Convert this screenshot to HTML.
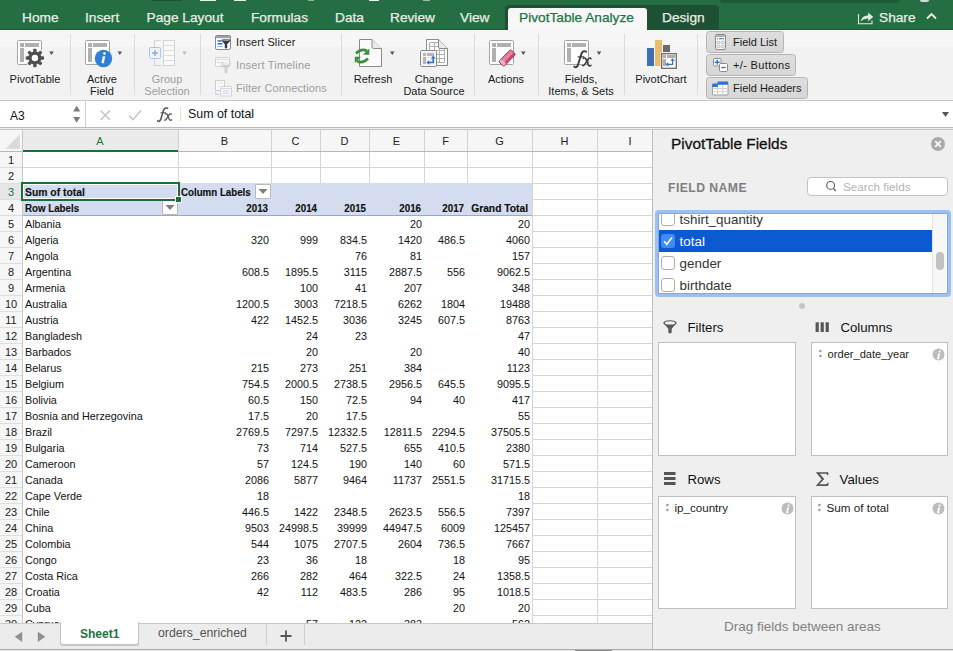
<!DOCTYPE html>
<html><head><meta charset="utf-8">
<style>
*{box-sizing:border-box;margin:0;padding:0}
html,body{width:953px;height:651px;overflow:hidden;background:#fff}
body{position:relative;font-family:"Liberation Sans",sans-serif;color:#000}
.a{position:absolute}
.t{position:absolute;white-space:nowrap;line-height:1}
.tab{position:absolute;top:11.1px;font-size:13.7px;color:#e9efe6;white-space:nowrap;line-height:14px;-webkit-text-stroke:0.25px #e9efe6}
.lbl{position:absolute;font-size:11px;color:#1a1a1a;white-space:nowrap;line-height:12px;text-align:center}
.dis{color:#9d9d9d}
.sep{position:absolute;top:34px;width:1px;height:61px;background:#dcdcdc}
.dd{position:absolute;width:0;height:0;border-left:2.5px solid transparent;border-right:2.5px solid transparent;border-top:4px solid #555}
.c{position:absolute;font-size:10.8px;line-height:16px;height:16px;white-space:nowrap;color:#111}
.n{text-align:right}
.b{font-weight:bold;font-size:10.7px;-webkit-text-stroke:0.15px #000;transform:scaleX(0.91);transform-origin:0 50%}
.b.n{transform-origin:100% 50%}
.rh{position:absolute;left:0;width:22px;text-align:center;font-size:11px;line-height:16px;color:#222}
.gl{position:absolute;background:#d5d5d5}
.ch{position:absolute;top:130px;height:21px;line-height:21px;text-align:center;font-size:11px;color:#222}
</style></head><body>
<!-- TAB BAR -->
<div class="a" style="left:0;top:0;width:953px;height:30px;background:#256e44"></div>
<div class="a" style="left:0;top:29px;width:953px;height:1px;background:#1b5833"></div>
<div class="a" style="left:720px;top:0;width:180px;height:3px;background:#1f5a37;border-radius:0 0 4px 4px"></div>
<div class="a" style="left:920px;top:0;width:9px;height:2px;background:#cfdcd3;border-radius:0 0 4px 4px"></div>
<div class="a" style="left:151px;top:0;width:31px;height:1px;background:#1d5034;border-radius:0 0 3px 3px"></div>
<div class="a" style="left:200px;top:0;width:16px;height:1px;background:#e8efe9"></div>
<div class="a" style="left:234px;top:0;width:12px;height:1px;background:#e8efe9"></div>
<div class="a" style="left:308px;top:0;width:6px;height:1px;background:#8fb39c"></div>
<div class="a" style="left:369px;top:0;width:10px;height:1px;background:#f2f6f3"></div>
<div class="a" style="left:423px;top:0;width:7px;height:1px;background:#9dbba8"></div>
<!-- contextual group -->
<div class="a" style="left:505px;top:5px;width:214px;height:25px;background:#1e5033;border-radius:4px 4px 0 0"></div>
<div class="a" style="left:508px;top:8px;width:139px;height:22px;background:#f7f7f7;border-radius:3px 3px 0 0"></div>
<div class="tab" style="left:22px">Home</div>
<div class="tab" style="left:85px">Insert</div>
<div class="tab" style="left:146.6px">Page Layout</div>
<div class="tab" style="left:251px">Formulas</div>
<div class="tab" style="left:335px">Data</div>
<div class="tab" style="left:390px">Review</div>
<div class="tab" style="left:460px">View</div>
<div class="tab" style="left:519px;color:#217346;-webkit-text-stroke:0.25px #217346">PivotTable Analyze</div>
<div class="tab" style="left:662px">Design</div>
<!-- share -->
<svg class="a" style="left:857px;top:10px" width="17" height="15" viewBox="0 0 17 15">
<path d="M1.5 4 V13.8 H15 V10.5" fill="none" stroke="#e3ebe3" stroke-width="1.1"/>
<path d="M3.8 11.8 C4.2 7.6 7.2 5.6 11.2 5.6 V2.4 L16.2 6.9 L11.2 11.2 V8.4 C8 8.4 5.6 9.4 3.8 11.8 Z" fill="#e3ebe3"/>
</svg>
<div class="tab" style="left:879px">Share</div>
<svg class="a" style="left:926px;top:12px" width="11" height="8" viewBox="0 0 11 8">
<path d="M1 6.5 L5.5 2 L10 6.5" fill="none" stroke="#e9efe6" stroke-width="1.8"/>
</svg>
<!-- RIBBON -->
<div class="a" style="left:0;top:30px;width:953px;height:70px;background:linear-gradient(#f6f6f6 0,#f6f6f6 17px,#f2f2f2 17px)"></div>
<div class="a" style="left:0;top:100px;width:953px;height:1px;background:#c9c9c9"></div>
<div class="sep" style="left:70px"></div>
<div class="sep" style="left:134px"></div>
<div class="sep" style="left:200px"></div>
<div class="sep" style="left:341px"></div>
<div class="sep" style="left:474px"></div>
<div class="sep" style="left:538px"></div>
<div class="sep" style="left:624px"></div>
<div class="sep" style="left:697px"></div>
<!-- PivotTable -->
<svg class="a" style="left:0;top:30px" width="70" height="70" viewBox="0 30 70 70">
<rect x="17.5" y="40.5" width="24" height="24" rx="1" fill="#fff" stroke="#a3a3a3"/>
<rect x="20" y="43" width="4" height="4" fill="#b0b0b0"/>
<rect x="25" y="43" width="14" height="4" fill="#b0b0b0"/>
<rect x="20" y="48" width="4" height="14" fill="#b0b0b0"/>
<g transform="translate(34.9 58)"><g fill="#f5f5f5" stroke="#f5f5f5" stroke-width="1.6"><circle r="6.5"/><rect x="-1.7" y="-9.2" width="3.4" height="5.5" rx="1.2" transform="rotate(0)"/><rect x="-1.7" y="-9.2" width="3.4" height="5.5" rx="1.2" transform="rotate(45)"/><rect x="-1.7" y="-9.2" width="3.4" height="5.5" rx="1.2" transform="rotate(90)"/><rect x="-1.7" y="-9.2" width="3.4" height="5.5" rx="1.2" transform="rotate(135)"/><rect x="-1.7" y="-9.2" width="3.4" height="5.5" rx="1.2" transform="rotate(180)"/><rect x="-1.7" y="-9.2" width="3.4" height="5.5" rx="1.2" transform="rotate(225)"/><rect x="-1.7" y="-9.2" width="3.4" height="5.5" rx="1.2" transform="rotate(270)"/><rect x="-1.7" y="-9.2" width="3.4" height="5.5" rx="1.2" transform="rotate(315)"/></g><g fill="#4f4f53"><circle r="6.5"/><rect x="-1.7" y="-9.2" width="3.4" height="5.5" rx="1.2" transform="rotate(0)"/><rect x="-1.7" y="-9.2" width="3.4" height="5.5" rx="1.2" transform="rotate(45)"/><rect x="-1.7" y="-9.2" width="3.4" height="5.5" rx="1.2" transform="rotate(90)"/><rect x="-1.7" y="-9.2" width="3.4" height="5.5" rx="1.2" transform="rotate(135)"/><rect x="-1.7" y="-9.2" width="3.4" height="5.5" rx="1.2" transform="rotate(180)"/><rect x="-1.7" y="-9.2" width="3.4" height="5.5" rx="1.2" transform="rotate(225)"/><rect x="-1.7" y="-9.2" width="3.4" height="5.5" rx="1.2" transform="rotate(270)"/><rect x="-1.7" y="-9.2" width="3.4" height="5.5" rx="1.2" transform="rotate(315)"/></g><circle r="3.2" fill="#fff"/></g>
<path d="M49.2 51.5 L53.8 51.5 L51.5 55 Z" fill="#555"/>
</svg>
<div class="lbl" style="left:5px;width:60px;top:72.7px">PivotTable</div>
<!-- Active Field -->
<svg class="a" style="left:70px;top:30px" width="64" height="70" viewBox="70 30 64 70">
<rect x="85.5" y="40.5" width="24" height="24" rx="1" fill="#fff" stroke="#a3a3a3"/>
<rect x="88" y="43" width="4" height="4" fill="#b0b0b0"/>
<rect x="93" y="43" width="14" height="4" fill="#b0b0b0"/>
<rect x="88" y="48" width="4" height="14" fill="#b0b0b0"/>
<circle cx="103.5" cy="58.5" r="8.7" fill="#2f7ed8"/>
<circle cx="104.4" cy="53.6" r="1.3" fill="#fff"/>
<path d="M103.2 56.3 L105.4 56.3 L103.9 62 Q103.8 62.6 104.6 62.3 L104.4 63 Q102.9 63.5 101.6 63 Q101.3 62.6 101.5 62 L102.7 57.2 L102 57.2 Z" fill="#fff"/>
<path d="M117.5 51.5 L122.1 51.5 L119.8 55 Z" fill="#555"/>
</svg>
<div class="lbl" style="left:72px;width:60px;top:72.7px">Active<br>Field</div>
<!-- Group Selection -->
<svg class="a" style="left:134px;top:30px" width="66" height="70" viewBox="134 30 66 70">
<path d="M161 40.5 H154.5 V65.5 H161" fill="none" stroke="#d3d3d3"/>
<rect x="163.5" y="40.5" width="11" height="25" fill="#fafafa" stroke="#d3d3d3"/>
<path d="M163.5 45.5 H174.5 M163.5 50.5 H174.5 M163.5 55.5 H174.5 M163.5 60.5 H174.5" stroke="#dedede"/>
<rect x="149.5" y="47.5" width="11" height="11" rx="1" fill="#eef3fa" stroke="#a9c4e6"/>
<path d="M155 50 V56 M152 53 H158" stroke="#8fb0dd" stroke-width="1.6"/>
<path d="M182.2 51.5 L186.8 51.5 L184.5 55 Z" fill="#bdbdbd"/>
</svg>
<div class="lbl dis" style="left:137px;width:60px;top:72.7px">Group<br>Selection</div>
<!-- Slicer group -->
<svg class="a" style="left:210px;top:30px" width="26" height="70" viewBox="210 30 26 70">
<rect x="215.5" y="35.5" width="15" height="14" rx="1.5" fill="#fff" stroke="#8a8a8a"/>
<rect x="216" y="36" width="14" height="2.2" fill="#a0a0a0"/>
<path d="M217.5 41 H221.5 M217.5 43.8 H222.5" stroke="#2f6fc4" stroke-width="1.5"/>
<path d="M217.5 46.4 H222.5" stroke="#8fb3e3" stroke-width="1.1"/>
<path d="M221.3 40.3 Q221.3 39.2 226 39.2 Q230.7 39.2 230.7 40.3 L227.2 44.3 V48 Q226 48.8 224.8 48 V44.3 Z" fill="#3b3b3b"/>
<ellipse cx="226" cy="40.3" rx="3.6" ry="0.8" fill="#9a9a9a"/>
<!-- timeline disabled -->
<rect x="215.5" y="57.5" width="14" height="9" rx="1" fill="#fafafa" stroke="#d0d0d0"/>
<path d="M216 59.5 H229" stroke="#dcdcdc"/>
<path d="M217.5 62.5 H219 M220.5 62.5 H221.5 M223 62.5 H224" stroke="#a9c2e6" stroke-width="1"/>
<path d="M220.5 64 Q220.5 62.8 226 62.8 Q231.5 62.8 231.5 64 L227.4 68.4 V72.8 Q226 73.6 224.6 72.8 V68.4 Z" fill="#cfcfcf"/>
<ellipse cx="226" cy="64" rx="4.3" ry="0.9" fill="#eeeeee"/>
<!-- filter connections disabled -->
<rect x="215.5" y="80.5" width="9" height="10" fill="#fafafa" stroke="#d0d0d0"/>
<path d="M217.5 83 H218.5 M219.5 83 H222.5 M217.5 85 H218.5 M217.5 87 H218.5" stroke="#d6d6d6"/>
<rect x="220.5" y="86.5" width="11" height="9.5" rx="1" fill="#fafafa" stroke="#d0d0d0"/>
<path d="M221 88.5 H231" stroke="#dadada"/>
<path d="M222.5 91 H229.5 M222.5 93.3 H229.5" stroke="#c0d3ee" stroke-width="1"/>
<path d="M215.8 91.5 V94.3 H219" fill="none" stroke="#b5cbea"/>
</svg>
<div class="t" style="left:236px;top:37.3px;font-size:11px;color:#1a1a1a;letter-spacing:0.12px">Insert Slicer</div>
<div class="t dis" style="left:236px;top:60.1px;font-size:11px;letter-spacing:0.2px">Insert Timeline</div>
<div class="t dis" style="left:236px;top:82.8px;font-size:11px;letter-spacing:0.13px">Filter Connections</div>
<!-- Refresh -->
<svg class="a" style="left:342px;top:30px" width="132" height="70" viewBox="342 30 132 70">
<path d="M359.5 39.5 H372 L381.5 49 V66.5 H359.5 Z" fill="#fbfbfb" stroke="#8a8a8a"/>
<path d="M372 39.5 V47 Q372 48.5 373.5 48.5 H381.5" fill="#ebebeb" stroke="#8a8a8a"/>
<g stroke="#f3f3f3" stroke-width="1.6" fill="none" opacity="0.9"><path d="M356 53.5 Q361 48 367 51"/><path d="M368 58.5 Q363 64 357 60.5"/></g>
<path d="M356 53.5 Q361.5 47.8 367 51" fill="none" stroke="#3e8d3c" stroke-width="2.7"/>
<path d="M369.3 48.6 L369.3 54.8 L363.1 54.8 Z" fill="#3e8d3c"/>
<path d="M368 58.5 Q362.5 64.2 357 61" fill="none" stroke="#3e8d3c" stroke-width="2.7"/>
<path d="M354.8 56.8 L354.8 63 L361 56.8 Z" fill="#3e8d3c"/>
<path d="M390 51.5 L394.6 51.5 L392.3 55 Z" fill="#555"/>
<!-- Change data source -->
<path d="M426.5 39.5 H438.5 L447.5 48.5 V65.5 H426.5 Z" fill="#fff" stroke="#8a8a8a"/>
<path d="M429.5 42.5 H438.5 M429.5 42.5 V62.5 H444.5 V48.5 M429.5 46.5 H438.5 M429.5 50.5 H444.5 M429.5 54.5 H444.5 M429.5 58.5 H444.5 M434.5 42.5 V62.5 M439.5 48.5 V62.5" fill="none" stroke="#b0b0b0"/>
<path d="M438.5 39.5 V47 Q438.5 48.5 440 48.5 H447.5" fill="#ebebeb" stroke="#8a8a8a"/>
<rect x="420.5" y="50.5" width="16" height="16" rx="1" fill="#f3f3f3" stroke="#8a8a8a"/>
<rect x="423" y="53" width="3" height="3" fill="#b5b5b5"/>
<rect x="427" y="53" width="7" height="3" fill="#b5b5b5"/>
<rect x="423" y="57" width="3" height="7" fill="#b5b5b5"/>
<path d="M428.5 62.5 H433.2 V58" fill="none" stroke="#2f74c8" stroke-width="1.6"/>
<path d="M426.3 62.5 L429.3 60.2 L429.3 64.8 Z M433.2 55.6 L430.9 58.6 L435.5 58.6 Z" fill="#2f74c8"/>
</svg>
<div class="lbl" style="left:343px;width:60px;top:72.7px">Refresh</div>
<div class="lbl" style="left:399px;width:70px;top:72.7px">Change<br>Data Source</div>
<!-- Actions -->
<svg class="a" style="left:475px;top:30px" width="222" height="70" viewBox="475 30 222 70">
<rect x="489.5" y="40.5" width="24" height="24" rx="1" fill="#fff" stroke="#a3a3a3"/>
<rect x="492" y="43" width="4" height="4" fill="#b0b0b0"/>
<rect x="497" y="43" width="14" height="4" fill="#b0b0b0"/>
<rect x="492" y="48" width="4" height="14" fill="#b0b0b0"/>
<g transform="translate(507.2 58) rotate(-46)"><rect x="-8.6" y="-3.6" width="17.2" height="7.2" rx="1.8" fill="#c94f72" stroke="#a23155" stroke-width="0.9"/><rect x="-8" y="-3.1" width="16.2" height="3.9" rx="1.2" fill="#e3859e"/><rect x="-8.1" y="-3.1" width="3.4" height="6.2" rx="1" fill="#f0b3c3"/></g>
<path d="M521 51.5 L525.6 51.5 L523.3 55 Z" fill="#555"/>
<!-- Fields -->
<rect x="564.5" y="40.5" width="24" height="24" rx="1" fill="#fff" stroke="#a3a3a3"/>
<rect x="567" y="43" width="4" height="4" fill="#b0b0b0"/>
<rect x="572" y="43" width="14" height="4" fill="#b0b0b0"/>
<rect x="567" y="48" width="4" height="14" fill="#b0b0b0"/>
<g fill="none" stroke="#3a3a3a" stroke-linecap="round"><path d="M574.3 66.6 Q576.3 68.3 577.9 65.2 L581.4 53.8 Q582.9 50.2 586.2 51.6" stroke-width="1.9"/><path d="M578.3 56.9 H583.8" stroke-width="1.3"/><path d="M583.2 58.4 Q585.2 57.2 586.2 59.6 L588 64.4 Q589 66.6 591 65.4" stroke-width="1.6"/><path d="M591 58.6 Q589.6 57.4 588.1 59.2 L584.7 64.4 Q583.7 66 582.6 65.6" stroke-width="1.5"/></g>
<path d="M596.7 51.5 L601.3 51.5 L599 55 Z" fill="#555"/>
<!-- PivotChart -->
<rect x="647" y="48" width="7" height="18" fill="#3d70b0"/>
<rect x="655" y="40" width="7" height="26" fill="#e8bb6d"/>
<rect x="663" y="45" width="7" height="7" fill="#6b6b6b"/>
<rect x="660.5" y="52.5" width="17" height="17" fill="#f4f4f4"/>
<rect x="661.7" y="53.7" width="14.6" height="14.6" fill="#fff" stroke="#6b6b6b" stroke-width="1.3"/>
<rect x="663" y="55" width="3" height="3" fill="#adadad"/>
<rect x="667" y="55" width="8" height="3" fill="#adadad"/>
<rect x="663" y="59" width="3" height="7" fill="#adadad"/>
<path d="M667 64.3 H672.6 V59.6" fill="none" stroke="#3a70b5" stroke-width="1.2"/>
<path d="M668.3 62.6 L666.4 64.3 L668.3 66 M670.9 60.9 L672.6 59 L674.3 60.9" fill="none" stroke="#3a70b5" stroke-width="1.1"/>
</svg>
<div class="lbl" style="left:476px;width:60px;top:72.7px">Actions</div>
<div class="lbl" style="left:541px;width:80px;top:72.7px">Fields,<br>Items, &amp; Sets</div>
<div class="lbl" style="left:631px;width:60px;top:72.7px">PivotChart</div>
<!-- toggle buttons -->
<div class="a" style="left:706px;top:31px;width:78px;height:22px;border:1px solid #b5b5b5;border-radius:3.5px;background:linear-gradient(#dedede,#d6d6d6)"></div>
<div class="a" style="left:706px;top:54px;width:90px;height:22px;border:1px solid #b5b5b5;border-radius:3.5px;background:linear-gradient(#dedede,#d6d6d6)"></div>
<div class="a" style="left:706px;top:77px;width:102px;height:22px;border:1px solid #b5b5b5;border-radius:3.5px;background:linear-gradient(#dedede,#d6d6d6)"></div>
<svg class="a" style="left:706px;top:30px" width="30" height="70" viewBox="706 30 30 70">
<rect x="715.5" y="34.5" width="10" height="15" rx="1.5" fill="#fff" stroke="#8a8a8a"/>
<rect x="716" y="35" width="9" height="2" fill="#b0b0b0"/>
<path d="M717 38.8 H718 M719 38.8 H724" stroke="#2f72c6" stroke-width="1.1"/>
<rect x="716.8" y="41.3" width="3" height="2.4" rx="0.5" fill="none" stroke="#a8a8a8" stroke-width="0.8"/>
<rect x="721.2" y="41.3" width="3" height="2.4" rx="0.5" fill="none" stroke="#a8a8a8" stroke-width="0.8"/>
<rect x="716.8" y="45.3" width="3" height="2.4" rx="0.5" fill="none" stroke="#a8a8a8" stroke-width="0.8"/>
<rect x="721.2" y="45.3" width="3" height="2.4" rx="0.5" fill="none" stroke="#a8a8a8" stroke-width="0.8"/>
<rect x="713.5" y="58.5" width="7.5" height="7.5" rx="1.2" fill="#fff" stroke="#8a8a8a"/>
<path d="M717.25 59.8 V64.7 M714.8 62.25 H719.7" stroke="#2f72c6" stroke-width="1.3"/>
<rect x="719.5" y="63.5" width="8" height="8" rx="1.2" fill="#fff" stroke="#8a8a8a"/>
<path d="M721.3 67.5 H725.7" stroke="#2f72c6" stroke-width="1.3"/>
<rect x="712.5" y="83.5" width="15.5" height="11.5" rx="1" fill="#fff" stroke="#9a9a9a"/>
<path d="M712.5 88.5 H728 M712.5 91.7 H728 M717.5 84 V95 M722.7 84 V95" stroke="#d0d0d0"/>
<rect x="712.3" y="84" width="5.6" height="3" fill="#2f72c6"/>
<rect x="717.5" y="81.6" width="10.7" height="3.2" rx="0.8" fill="#2f72c6"/>
</svg>
<div class="t" style="left:733px;top:37.2px;font-size:11px;color:#1a1a1a">Field List</div>
<div class="t" style="left:733px;top:60.1px;font-size:11px;color:#1a1a1a;letter-spacing:0.35px">+/- Buttons</div>
<div class="t" style="left:733px;top:83.3px;font-size:11px;color:#1a1a1a">Field Headers</div>
<!-- FORMULA BAR -->
<div class="a" style="left:0;top:101px;width:953px;height:26px;background:#fff"></div>
<div class="a" style="left:85px;top:101px;width:1px;height:26px;background:#cfcfcf"></div>
<div class="t" style="left:10px;top:109.5px;font-size:12px;color:#111">A3</div>
<svg class="a" style="left:72px;top:104px" width="10" height="21"><path d="M1.2 7.5 L4.7 1.8 L8.2 7.5 Z M1.2 13 L8.2 13 L4.7 18.8 Z" fill="#7a7a7a"/></svg>
<svg class="a" style="left:98px;top:108px" width="46" height="14"><path d="M2.5 2.5 L12 12 M12 2.5 L2.5 12" stroke="#c6c6c6" stroke-width="1.6"/><path d="M31 7.5 L35 11.5 L43 2.5" fill="none" stroke="#c6c6c6" stroke-width="1.6"/></svg>
<svg class="a" style="left:0;top:0" width="200" height="130"><g transform="translate(157.6 121.9) scale(0.84) translate(-574.3 -67.8)" fill="none" stroke="#555" stroke-linecap="round"><path d="M574.3 66.6 Q576.3 68.3 577.9 65.2 L581.4 53.8 Q582.9 50.2 586.2 51.6" stroke-width="1.9"/><path d="M578.3 56.9 H583.8" stroke-width="1.3"/><path d="M583.2 58.4 Q585.2 57.2 586.2 59.6 L588 64.4 Q589 66.6 591 65.4" stroke-width="1.6"/><path d="M591 58.6 Q589.6 57.4 588.1 59.2 L584.7 64.4 Q583.7 66 582.6 65.6" stroke-width="1.5"/></g></svg>
<div class="a" style="left:180px;top:107px;width:1px;height:14px;background:#dedede"></div>
<div class="t" style="left:188px;top:108.3px;font-size:12.4px;color:#111">Sum of total</div>
<svg class="a" style="left:941px;top:111px" width="9" height="7"><path d="M1 1 L8 1 L4.5 6 Z" fill="#555"/></svg>
<div class="a" style="left:0;top:127px;width:953px;height:1px;background:#b9b9b9"></div>
<div class="a" style="left:0;top:128px;width:953px;height:1px;background:#ececec"></div>
<div class="a" style="left:0;top:129px;width:953px;height:1px;background:#c6c6c6"></div>
<!-- GRID -->
<div class="a" style="left:0;top:130px;width:652px;height:21px;background:#f6f6f6"></div>
<div class="a" style="left:0;top:151px;width:22px;height:472px;background:#f6f6f6"></div>
<div class="a" style="left:23px;top:130px;width:155px;height:21px;background:#eaeaea"></div>
<div class="a" style="left:0;top:184px;width:22px;height:15px;background:#e6e6e6"></div>
<svg class="a" style="left:0;top:130px" width="22" height="21"><path d="M5.5 18.8 L19.8 4.3 L19.8 18.8 Z" fill="#d9d9d9"/></svg>
<div class="ch" style="left:22px;width:156px;color:#217346;line-height:1;top:136.3px;font-size:11px">A</div>
<div class="ch" style="left:178px;width:93px;color:#222;line-height:1;top:136.3px;font-size:11px">B</div>
<div class="ch" style="left:271px;width:49px;color:#222;line-height:1;top:136.3px;font-size:11px">C</div>
<div class="ch" style="left:320px;width:49px;color:#222;line-height:1;top:136.3px;font-size:11px">D</div>
<div class="ch" style="left:369px;width:55px;color:#222;line-height:1;top:136.3px;font-size:11px">E</div>
<div class="ch" style="left:424px;width:43px;color:#222;line-height:1;top:136.3px;font-size:11px">F</div>
<div class="ch" style="left:467px;width:65px;color:#222;line-height:1;top:136.3px;font-size:11px">G</div>
<div class="ch" style="left:532px;width:65px;color:#222;line-height:1;top:136.3px;font-size:11px">H</div>
<div class="ch" style="left:597px;width:66px;color:#222;line-height:1;top:136.3px;font-size:11px">I</div>
<div class="a" style="left:22px;top:130px;width:1px;height:21px;background:#d2d2d2"></div>
<div class="a" style="left:178px;top:130px;width:1px;height:21px;background:#d2d2d2"></div>
<div class="a" style="left:271px;top:130px;width:1px;height:21px;background:#d2d2d2"></div>
<div class="a" style="left:320px;top:130px;width:1px;height:21px;background:#d2d2d2"></div>
<div class="a" style="left:369px;top:130px;width:1px;height:21px;background:#d2d2d2"></div>
<div class="a" style="left:424px;top:130px;width:1px;height:21px;background:#d2d2d2"></div>
<div class="a" style="left:467px;top:130px;width:1px;height:21px;background:#d2d2d2"></div>
<div class="a" style="left:532px;top:130px;width:1px;height:21px;background:#d2d2d2"></div>
<div class="a" style="left:597px;top:130px;width:1px;height:21px;background:#d2d2d2"></div>
<div class="a" style="left:0;top:151px;width:652px;height:1px;background:#b9b7b5"></div>
<div class="a" style="left:23px;top:150px;width:155px;height:2px;background:#1e6b3c"></div>
<div class="rh" style="top:152px;color:#222">1</div>
<div class="a" style="left:0;top:167px;width:22px;height:1px;background:#dedede"></div>
<div class="rh" style="top:168px;color:#222">2</div>
<div class="a" style="left:0;top:183px;width:22px;height:1px;background:#dedede"></div>
<div class="rh" style="top:184px;color:#217346">3</div>
<div class="a" style="left:0;top:199px;width:22px;height:1px;background:#dedede"></div>
<div class="rh" style="top:200px;color:#222">4</div>
<div class="a" style="left:0;top:215px;width:22px;height:1px;background:#dedede"></div>
<div class="rh" style="top:216px;color:#222">5</div>
<div class="a" style="left:0;top:231px;width:22px;height:1px;background:#dedede"></div>
<div class="rh" style="top:232px;color:#222">6</div>
<div class="a" style="left:0;top:247px;width:22px;height:1px;background:#dedede"></div>
<div class="rh" style="top:248px;color:#222">7</div>
<div class="a" style="left:0;top:263px;width:22px;height:1px;background:#dedede"></div>
<div class="rh" style="top:264px;color:#222">8</div>
<div class="a" style="left:0;top:279px;width:22px;height:1px;background:#dedede"></div>
<div class="rh" style="top:280px;color:#222">9</div>
<div class="a" style="left:0;top:295px;width:22px;height:1px;background:#dedede"></div>
<div class="rh" style="top:296px;color:#222">10</div>
<div class="a" style="left:0;top:311px;width:22px;height:1px;background:#dedede"></div>
<div class="rh" style="top:312px;color:#222">11</div>
<div class="a" style="left:0;top:327px;width:22px;height:1px;background:#dedede"></div>
<div class="rh" style="top:328px;color:#222">12</div>
<div class="a" style="left:0;top:343px;width:22px;height:1px;background:#dedede"></div>
<div class="rh" style="top:344px;color:#222">13</div>
<div class="a" style="left:0;top:359px;width:22px;height:1px;background:#dedede"></div>
<div class="rh" style="top:360px;color:#222">14</div>
<div class="a" style="left:0;top:375px;width:22px;height:1px;background:#dedede"></div>
<div class="rh" style="top:376px;color:#222">15</div>
<div class="a" style="left:0;top:391px;width:22px;height:1px;background:#dedede"></div>
<div class="rh" style="top:392px;color:#222">16</div>
<div class="a" style="left:0;top:407px;width:22px;height:1px;background:#dedede"></div>
<div class="rh" style="top:408px;color:#222">17</div>
<div class="a" style="left:0;top:423px;width:22px;height:1px;background:#dedede"></div>
<div class="rh" style="top:424px;color:#222">18</div>
<div class="a" style="left:0;top:439px;width:22px;height:1px;background:#dedede"></div>
<div class="rh" style="top:440px;color:#222">19</div>
<div class="a" style="left:0;top:455px;width:22px;height:1px;background:#dedede"></div>
<div class="rh" style="top:456px;color:#222">20</div>
<div class="a" style="left:0;top:471px;width:22px;height:1px;background:#dedede"></div>
<div class="rh" style="top:472px;color:#222">21</div>
<div class="a" style="left:0;top:487px;width:22px;height:1px;background:#dedede"></div>
<div class="rh" style="top:488px;color:#222">22</div>
<div class="a" style="left:0;top:503px;width:22px;height:1px;background:#dedede"></div>
<div class="rh" style="top:504px;color:#222">23</div>
<div class="a" style="left:0;top:519px;width:22px;height:1px;background:#dedede"></div>
<div class="rh" style="top:520px;color:#222">24</div>
<div class="a" style="left:0;top:535px;width:22px;height:1px;background:#dedede"></div>
<div class="rh" style="top:536px;color:#222">25</div>
<div class="a" style="left:0;top:551px;width:22px;height:1px;background:#dedede"></div>
<div class="rh" style="top:552px;color:#222">26</div>
<div class="a" style="left:0;top:567px;width:22px;height:1px;background:#dedede"></div>
<div class="rh" style="top:568px;color:#222">27</div>
<div class="a" style="left:0;top:583px;width:22px;height:1px;background:#dedede"></div>
<div class="rh" style="top:584px;color:#222">28</div>
<div class="a" style="left:0;top:599px;width:22px;height:1px;background:#dedede"></div>
<div class="rh" style="top:600px;color:#222">29</div>
<div class="a" style="left:0;top:615px;width:22px;height:1px;background:#dedede"></div>
<div class="rh" style="top:616px;color:#222">30</div>
<div class="a" style="left:0;top:631px;width:22px;height:1px;background:#dedede"></div>
<div class="a" style="left:22px;top:130px;width:1px;height:493px;background:#c8c8c8"></div>
<div class="gl" style="left:23px;top:167px;width:629px;height:1px"></div>
<div class="gl" style="left:23px;top:183px;width:629px;height:1px"></div>
<div class="gl" style="left:178px;top:152px;width:1px;height:31px"></div>
<div class="gl" style="left:271px;top:152px;width:1px;height:31px"></div>
<div class="gl" style="left:320px;top:152px;width:1px;height:31px"></div>
<div class="gl" style="left:369px;top:152px;width:1px;height:31px"></div>
<div class="gl" style="left:424px;top:152px;width:1px;height:31px"></div>
<div class="gl" style="left:467px;top:152px;width:1px;height:31px"></div>
<div class="gl" style="left:532px;top:152px;width:1px;height:31px"></div>
<div class="gl" style="left:597px;top:152px;width:1px;height:31px"></div>
<div class="gl" style="left:532px;top:199px;width:120px;height:1px"></div>
<div class="gl" style="left:532px;top:215px;width:120px;height:1px"></div>
<div class="gl" style="left:532px;top:231px;width:120px;height:1px"></div>
<div class="gl" style="left:532px;top:247px;width:120px;height:1px"></div>
<div class="gl" style="left:532px;top:263px;width:120px;height:1px"></div>
<div class="gl" style="left:532px;top:279px;width:120px;height:1px"></div>
<div class="gl" style="left:532px;top:295px;width:120px;height:1px"></div>
<div class="gl" style="left:532px;top:311px;width:120px;height:1px"></div>
<div class="gl" style="left:532px;top:327px;width:120px;height:1px"></div>
<div class="gl" style="left:532px;top:343px;width:120px;height:1px"></div>
<div class="gl" style="left:532px;top:359px;width:120px;height:1px"></div>
<div class="gl" style="left:532px;top:375px;width:120px;height:1px"></div>
<div class="gl" style="left:532px;top:391px;width:120px;height:1px"></div>
<div class="gl" style="left:532px;top:407px;width:120px;height:1px"></div>
<div class="gl" style="left:532px;top:423px;width:120px;height:1px"></div>
<div class="gl" style="left:532px;top:439px;width:120px;height:1px"></div>
<div class="gl" style="left:532px;top:455px;width:120px;height:1px"></div>
<div class="gl" style="left:532px;top:471px;width:120px;height:1px"></div>
<div class="gl" style="left:532px;top:487px;width:120px;height:1px"></div>
<div class="gl" style="left:532px;top:503px;width:120px;height:1px"></div>
<div class="gl" style="left:532px;top:519px;width:120px;height:1px"></div>
<div class="gl" style="left:532px;top:535px;width:120px;height:1px"></div>
<div class="gl" style="left:532px;top:551px;width:120px;height:1px"></div>
<div class="gl" style="left:532px;top:567px;width:120px;height:1px"></div>
<div class="gl" style="left:532px;top:583px;width:120px;height:1px"></div>
<div class="gl" style="left:532px;top:599px;width:120px;height:1px"></div>
<div class="gl" style="left:532px;top:615px;width:120px;height:1px"></div>
<div class="gl" style="left:532px;top:631px;width:120px;height:1px"></div>
<div class="gl" style="left:532px;top:183px;width:1px;height:440px"></div>
<div class="gl" style="left:597px;top:183px;width:1px;height:440px"></div>
<div class="a" style="left:23px;top:183px;width:509px;height:32px;background:#d4ddf0"></div>
<div class="a" style="left:23px;top:215px;width:509px;height:1px;background:#8eaadb"></div>
<div class="c b" style="left:25px;top:184px;transform:scaleX(0.97)">Sum of total</div>
<div class="c b" style="left:181px;top:184px">Column Labels</div>
<div class="c b" style="left:25px;top:200px">Row Labels</div>
<div class="c b n" style="left:168px;width:100px;top:200px">2013</div>
<div class="c b n" style="left:217px;width:100px;top:200px">2014</div>
<div class="c b n" style="left:266px;width:100px;top:200px">2015</div>
<div class="c b n" style="left:321px;width:100px;top:200px">2016</div>
<div class="c b n" style="left:364px;width:100px;top:200px">2017</div>
<div class="c b n" style="left:428px;width:100px;top:200px;transform:scaleX(0.96)">Grand Total</div>
<div class="a" style="left:255px;top:184px;width:16px;height:15px;background:#fff;border:1px solid #b9b9b9;border-radius:1px"></div>
<svg class="a" style="left:255px;top:184px" width="16" height="15"><path d="M3.5 5 L12.5 5 L8 10 Z" fill="#7d7d7d"/></svg>
<div class="a" style="left:162px;top:200px;width:16px;height:15px;background:#fff;border:1px solid #b9b9b9;border-radius:1px"></div>
<svg class="a" style="left:162px;top:200px" width="16" height="15"><path d="M3.5 5 L12.5 5 L8 10 Z" fill="#7d7d7d"/></svg>
<div class="c" style="left:25px;top:216px">Albania</div>
<div class="c n" style="left:322px;width:100px;top:216px">20</div>
<div class="c n" style="left:430px;width:100px;top:216px">20</div>
<div class="c" style="left:25px;top:232px">Algeria</div>
<div class="c n" style="left:169px;width:100px;top:232px">320</div>
<div class="c n" style="left:218px;width:100px;top:232px">999</div>
<div class="c n" style="left:267px;width:100px;top:232px">834.5</div>
<div class="c n" style="left:322px;width:100px;top:232px">1420</div>
<div class="c n" style="left:365px;width:100px;top:232px">486.5</div>
<div class="c n" style="left:430px;width:100px;top:232px">4060</div>
<div class="c" style="left:25px;top:248px">Angola</div>
<div class="c n" style="left:267px;width:100px;top:248px">76</div>
<div class="c n" style="left:322px;width:100px;top:248px">81</div>
<div class="c n" style="left:430px;width:100px;top:248px">157</div>
<div class="c" style="left:25px;top:264px">Argentina</div>
<div class="c n" style="left:169px;width:100px;top:264px">608.5</div>
<div class="c n" style="left:218px;width:100px;top:264px">1895.5</div>
<div class="c n" style="left:267px;width:100px;top:264px">3115</div>
<div class="c n" style="left:322px;width:100px;top:264px">2887.5</div>
<div class="c n" style="left:365px;width:100px;top:264px">556</div>
<div class="c n" style="left:430px;width:100px;top:264px">9062.5</div>
<div class="c" style="left:25px;top:280px">Armenia</div>
<div class="c n" style="left:218px;width:100px;top:280px">100</div>
<div class="c n" style="left:267px;width:100px;top:280px">41</div>
<div class="c n" style="left:322px;width:100px;top:280px">207</div>
<div class="c n" style="left:430px;width:100px;top:280px">348</div>
<div class="c" style="left:25px;top:296px">Australia</div>
<div class="c n" style="left:169px;width:100px;top:296px">1200.5</div>
<div class="c n" style="left:218px;width:100px;top:296px">3003</div>
<div class="c n" style="left:267px;width:100px;top:296px">7218.5</div>
<div class="c n" style="left:322px;width:100px;top:296px">6262</div>
<div class="c n" style="left:365px;width:100px;top:296px">1804</div>
<div class="c n" style="left:430px;width:100px;top:296px">19488</div>
<div class="c" style="left:25px;top:312px">Austria</div>
<div class="c n" style="left:169px;width:100px;top:312px">422</div>
<div class="c n" style="left:218px;width:100px;top:312px">1452.5</div>
<div class="c n" style="left:267px;width:100px;top:312px">3036</div>
<div class="c n" style="left:322px;width:100px;top:312px">3245</div>
<div class="c n" style="left:365px;width:100px;top:312px">607.5</div>
<div class="c n" style="left:430px;width:100px;top:312px">8763</div>
<div class="c" style="left:25px;top:328px">Bangladesh</div>
<div class="c n" style="left:218px;width:100px;top:328px">24</div>
<div class="c n" style="left:267px;width:100px;top:328px">23</div>
<div class="c n" style="left:430px;width:100px;top:328px">47</div>
<div class="c" style="left:25px;top:344px">Barbados</div>
<div class="c n" style="left:218px;width:100px;top:344px">20</div>
<div class="c n" style="left:322px;width:100px;top:344px">20</div>
<div class="c n" style="left:430px;width:100px;top:344px">40</div>
<div class="c" style="left:25px;top:360px">Belarus</div>
<div class="c n" style="left:169px;width:100px;top:360px">215</div>
<div class="c n" style="left:218px;width:100px;top:360px">273</div>
<div class="c n" style="left:267px;width:100px;top:360px">251</div>
<div class="c n" style="left:322px;width:100px;top:360px">384</div>
<div class="c n" style="left:430px;width:100px;top:360px">1123</div>
<div class="c" style="left:25px;top:376px">Belgium</div>
<div class="c n" style="left:169px;width:100px;top:376px">754.5</div>
<div class="c n" style="left:218px;width:100px;top:376px">2000.5</div>
<div class="c n" style="left:267px;width:100px;top:376px">2738.5</div>
<div class="c n" style="left:322px;width:100px;top:376px">2956.5</div>
<div class="c n" style="left:365px;width:100px;top:376px">645.5</div>
<div class="c n" style="left:430px;width:100px;top:376px">9095.5</div>
<div class="c" style="left:25px;top:392px">Bolivia</div>
<div class="c n" style="left:169px;width:100px;top:392px">60.5</div>
<div class="c n" style="left:218px;width:100px;top:392px">150</div>
<div class="c n" style="left:267px;width:100px;top:392px">72.5</div>
<div class="c n" style="left:322px;width:100px;top:392px">94</div>
<div class="c n" style="left:365px;width:100px;top:392px">40</div>
<div class="c n" style="left:430px;width:100px;top:392px">417</div>
<div class="c" style="left:25px;top:408px">Bosnia and Herzegovina</div>
<div class="c n" style="left:169px;width:100px;top:408px">17.5</div>
<div class="c n" style="left:218px;width:100px;top:408px">20</div>
<div class="c n" style="left:267px;width:100px;top:408px">17.5</div>
<div class="c n" style="left:430px;width:100px;top:408px">55</div>
<div class="c" style="left:25px;top:424px">Brazil</div>
<div class="c n" style="left:169px;width:100px;top:424px">2769.5</div>
<div class="c n" style="left:218px;width:100px;top:424px">7297.5</div>
<div class="c n" style="left:267px;width:100px;top:424px">12332.5</div>
<div class="c n" style="left:322px;width:100px;top:424px">12811.5</div>
<div class="c n" style="left:365px;width:100px;top:424px">2294.5</div>
<div class="c n" style="left:430px;width:100px;top:424px">37505.5</div>
<div class="c" style="left:25px;top:440px">Bulgaria</div>
<div class="c n" style="left:169px;width:100px;top:440px">73</div>
<div class="c n" style="left:218px;width:100px;top:440px">714</div>
<div class="c n" style="left:267px;width:100px;top:440px">527.5</div>
<div class="c n" style="left:322px;width:100px;top:440px">655</div>
<div class="c n" style="left:365px;width:100px;top:440px">410.5</div>
<div class="c n" style="left:430px;width:100px;top:440px">2380</div>
<div class="c" style="left:25px;top:456px">Cameroon</div>
<div class="c n" style="left:169px;width:100px;top:456px">57</div>
<div class="c n" style="left:218px;width:100px;top:456px">124.5</div>
<div class="c n" style="left:267px;width:100px;top:456px">190</div>
<div class="c n" style="left:322px;width:100px;top:456px">140</div>
<div class="c n" style="left:365px;width:100px;top:456px">60</div>
<div class="c n" style="left:430px;width:100px;top:456px">571.5</div>
<div class="c" style="left:25px;top:472px">Canada</div>
<div class="c n" style="left:169px;width:100px;top:472px">2086</div>
<div class="c n" style="left:218px;width:100px;top:472px">5877</div>
<div class="c n" style="left:267px;width:100px;top:472px">9464</div>
<div class="c n" style="left:322px;width:100px;top:472px">11737</div>
<div class="c n" style="left:365px;width:100px;top:472px">2551.5</div>
<div class="c n" style="left:430px;width:100px;top:472px">31715.5</div>
<div class="c" style="left:25px;top:488px">Cape Verde</div>
<div class="c n" style="left:169px;width:100px;top:488px">18</div>
<div class="c n" style="left:430px;width:100px;top:488px">18</div>
<div class="c" style="left:25px;top:504px">Chile</div>
<div class="c n" style="left:169px;width:100px;top:504px">446.5</div>
<div class="c n" style="left:218px;width:100px;top:504px">1422</div>
<div class="c n" style="left:267px;width:100px;top:504px">2348.5</div>
<div class="c n" style="left:322px;width:100px;top:504px">2623.5</div>
<div class="c n" style="left:365px;width:100px;top:504px">556.5</div>
<div class="c n" style="left:430px;width:100px;top:504px">7397</div>
<div class="c" style="left:25px;top:520px">China</div>
<div class="c n" style="left:169px;width:100px;top:520px">9503</div>
<div class="c n" style="left:218px;width:100px;top:520px">24998.5</div>
<div class="c n" style="left:267px;width:100px;top:520px">39999</div>
<div class="c n" style="left:322px;width:100px;top:520px">44947.5</div>
<div class="c n" style="left:365px;width:100px;top:520px">6009</div>
<div class="c n" style="left:430px;width:100px;top:520px">125457</div>
<div class="c" style="left:25px;top:536px">Colombia</div>
<div class="c n" style="left:169px;width:100px;top:536px">544</div>
<div class="c n" style="left:218px;width:100px;top:536px">1075</div>
<div class="c n" style="left:267px;width:100px;top:536px">2707.5</div>
<div class="c n" style="left:322px;width:100px;top:536px">2604</div>
<div class="c n" style="left:365px;width:100px;top:536px">736.5</div>
<div class="c n" style="left:430px;width:100px;top:536px">7667</div>
<div class="c" style="left:25px;top:552px">Congo</div>
<div class="c n" style="left:169px;width:100px;top:552px">23</div>
<div class="c n" style="left:218px;width:100px;top:552px">36</div>
<div class="c n" style="left:267px;width:100px;top:552px">18</div>
<div class="c n" style="left:365px;width:100px;top:552px">18</div>
<div class="c n" style="left:430px;width:100px;top:552px">95</div>
<div class="c" style="left:25px;top:568px">Costa Rica</div>
<div class="c n" style="left:169px;width:100px;top:568px">266</div>
<div class="c n" style="left:218px;width:100px;top:568px">282</div>
<div class="c n" style="left:267px;width:100px;top:568px">464</div>
<div class="c n" style="left:322px;width:100px;top:568px">322.5</div>
<div class="c n" style="left:365px;width:100px;top:568px">24</div>
<div class="c n" style="left:430px;width:100px;top:568px">1358.5</div>
<div class="c" style="left:25px;top:584px">Croatia</div>
<div class="c n" style="left:169px;width:100px;top:584px">42</div>
<div class="c n" style="left:218px;width:100px;top:584px">112</div>
<div class="c n" style="left:267px;width:100px;top:584px">483.5</div>
<div class="c n" style="left:322px;width:100px;top:584px">286</div>
<div class="c n" style="left:365px;width:100px;top:584px">95</div>
<div class="c n" style="left:430px;width:100px;top:584px">1018.5</div>
<div class="c" style="left:25px;top:600px">Cuba</div>
<div class="c n" style="left:365px;width:100px;top:600px">20</div>
<div class="c n" style="left:430px;width:100px;top:600px">20</div>
<div class="c" style="left:25px;top:616px">Cyprus</div>
<div class="c n" style="left:218px;width:100px;top:616px">57</div>
<div class="c n" style="left:267px;width:100px;top:616px">122</div>
<div class="c n" style="left:322px;width:100px;top:616px">383</div>
<div class="c n" style="left:430px;width:100px;top:616px">562</div>
<div class="a" style="left:21px;top:182px;width:159px;height:19px;border:2px solid #1e6b3c"></div>
<div class="a" style="left:23px;top:184px;width:155px;height:15px;border:1px solid #fff"></div>
<div class="a" style="left:175px;top:196px;width:7px;height:7px;background:#fff"></div>
<div class="a" style="left:176px;top:197px;width:5px;height:5px;background:#1e6b3c"></div>
<!-- SHEET TABS -->
<div class="a" style="left:0;top:623px;width:652px;height:26px;background:#ececec"></div>
<div class="a" style="left:0;top:623px;width:60px;height:1px;background:#c9c9c9"></div><div class="a" style="left:139px;top:623px;width:513px;height:1px;background:#c9c9c9"></div>
<svg class="a" style="left:12px;top:630px" width="36" height="14"><path d="M10.2 1.8 L10.2 11.9 L2.8 6.85 Z" fill="#8f8f8f"/><path d="M25.8 1.8 L25.8 11.9 L33.3 6.85 Z" fill="#8f8f8f"/></svg>
<div class="a" style="left:60px;top:622px;width:79px;height:23px;background:#fff;border:1px solid #c6c6c6;border-top:none;border-radius:0 0 3px 3px;box-shadow:0 1px 1px rgba(0,0,0,0.18)"></div>
<div class="t" style="left:80px;top:627.5px;font-size:12px;font-weight:bold;color:#217346">Sheet1</div>
<div class="t" style="left:158px;top:626.8px;font-size:12.3px;color:#555">orders_enriched</div>
<div class="a" style="left:266px;top:624px;width:1px;height:21px;background:#cfcfcf"></div>
<div class="a" style="left:304px;top:624px;width:1px;height:21px;background:#cfcfcf"></div>
<svg class="a" style="left:279px;top:629px" width="14" height="14"><path d="M7 1.5 V12.5 M1.5 7 H12.5" stroke="#555" stroke-width="1.8"/></svg>
<div class="a" style="left:0;top:649px;width:953px;height:1px;background:#a9a9a9"></div>
<div class="a" style="left:0;top:650px;width:953px;height:1px;background:#e8e8e8"></div>
<div class="a" style="left:575px;top:650px;width:37px;height:1px;background:#8a8a8a"></div>
<!-- PIVOT PANE -->
<div class="a" style="left:652px;top:130px;width:301px;height:519px;background:#efefef"></div>
<div class="a" style="left:652px;top:130px;width:1px;height:519px;background:#bdbdbd"></div>
<div class="t" style="left:671px;top:136px;font-size:15.4px;color:#111;-webkit-text-stroke:0.3px #111">PivotTable Fields</div>
<svg class="a" style="left:930px;top:136px" width="16" height="16"><circle cx="8" cy="8" r="7" fill="#a9a9a9"/><path d="M5.2 5.2 L10.8 10.8 M10.8 5.2 L5.2 10.8" stroke="#fff" stroke-width="1.7"/></svg>
<div class="t" style="left:668px;top:182.3px;font-size:12.2px;font-weight:bold;color:#7f7f7f;letter-spacing:0.45px">FIELD NAME</div>
<div class="a" style="left:807px;top:177px;width:141px;height:19px;background:#fff;border:1px solid #c3c3c3;border-radius:4px"></div>
<svg class="a" style="left:825px;top:180px" width="14" height="14"><circle cx="5.6" cy="5.4" r="3.9" fill="none" stroke="#555" stroke-width="1.1"/><path d="M8.4 8.3 L10.8 11.2" stroke="#555" stroke-width="1.3"/></svg>
<div class="t" style="left:843px;top:180.8px;font-size:11.7px;color:#b3b3b3">Search fields</div>
<!-- field list -->
<div class="a" style="left:655px;top:210px;width:296px;height:87px;background:#9cc0f2;border-radius:4px"></div>
<div class="a" style="left:658px;top:213px;width:290px;height:81px;background:#fff;border:1px solid #7ea9e6;overflow:hidden">
  <div class="a" style="left:273px;top:0;width:15px;height:79px;background:#f7f7f7;border-left:1px solid #e3e3e3"></div>
  <div class="a" style="left:277px;top:38px;width:8px;height:18px;background:#c2c2c2;border-radius:4px"></div>
  <div class="a" style="left:0;top:16px;width:273px;height:22px;background:#0b5ad2"></div>
</div>
<div class="a" style="left:659px;top:214px;width:273px;height:79px;overflow:hidden">
  <div class="a" style="left:2px;top:-2px;width:14px;height:14px;border:1px solid #adadad;border-radius:3px;background:#fff"></div>
  <div class="t" style="left:20.6px;top:-0.9px;font-size:13.4px;color:#333">tshirt_quantity</div>
  <div class="a" style="left:2px;top:20px;width:14px;height:14px;border-radius:3px;background:#3f8cf3"></div>
  <svg class="a" style="left:2px;top:20px" width="14" height="14"><path d="M3 7.3 L5.8 10.3 L11 3.5" fill="none" stroke="#fff" stroke-width="1.6"/></svg>
  <div class="t" style="left:20.6px;top:21.1px;font-size:13.4px;color:#fff">total</div>
  <div class="a" style="left:2px;top:42px;width:14px;height:14px;border:1px solid #adadad;border-radius:3px;background:#fff"></div>
  <div class="t" style="left:20.6px;top:43.1px;font-size:13.4px;color:#333">gender</div>
  <div class="a" style="left:2px;top:64px;width:14px;height:14px;border:1px solid #adadad;border-radius:3px;background:#fff"></div>
  <div class="t" style="left:20.6px;top:65.1px;font-size:13.4px;color:#333">birthdate</div>
</div>
<div class="a" style="left:799px;top:303px;width:6px;height:6px;border-radius:3px;background:#c6c6c6"></div>
<!-- areas -->
<svg class="a" style="left:662px;top:319px" width="16" height="16"><path d="M1.4 4 L6.3 9.8 V13.6 Q8 15.6 9.7 13.6 V9.8 L14.6 4 Z" fill="#5a5a5a"/><ellipse cx="8" cy="4" rx="6.7" ry="2.8" fill="#5a5a5a"/><ellipse cx="8" cy="3.9" rx="5.1" ry="1.6" fill="#f2f2f2"/></svg>
<div class="t" style="left:687.5px;top:321px;font-size:13.2px;color:#111">Filters</div>
<svg class="a" style="left:815px;top:322px" width="15" height="11"><rect x="0.6" y="0.3" width="3.2" height="9.7" fill="#555"/><rect x="5.6" y="0.3" width="3.2" height="9.7" fill="#555"/><rect x="10.6" y="0.3" width="3.2" height="9.7" fill="#555"/></svg>
<div class="t" style="left:840.4px;top:320.9px;font-size:13.2px;color:#111">Columns</div>
<div class="a" style="left:658px;top:342px;width:138px;height:114px;background:#fff;border:1px solid #bfbfbf"></div>
<div class="a" style="left:811px;top:342px;width:137px;height:114px;background:#fff;border:1px solid #bfbfbf"></div>
<svg class="a" style="left:663px;top:471px" width="14" height="15"><rect x="1" y="1" width="11.5" height="3" fill="#555"/><rect x="1" y="6" width="11.5" height="3" fill="#555"/><rect x="1" y="11" width="11.5" height="3" fill="#555"/></svg>
<div class="t" style="left:687.5px;top:472.7px;font-size:13.2px;color:#111">Rows</div>
<svg class="a" style="left:815px;top:471px" width="15" height="16"><path d="M0.8 1.2 H13.3 V4.2 H12.4 Q12 2.8 10.5 2.8 H4.8 L9.2 8.1 L4.3 13.3 H10.8 Q12.4 13.3 12.8 11.6 H13.6 L13.2 15 H0.8 L6.6 8.3 Z" fill="#555"/></svg>
<div class="t" style="left:839.6px;top:472.7px;font-size:13.2px;color:#111">Values</div>
<div class="a" style="left:658px;top:496px;width:138px;height:113px;background:#fff;border:1px solid #bfbfbf"></div>
<div class="a" style="left:811px;top:496px;width:137px;height:113px;background:#fff;border:1px solid #bfbfbf"></div>
<!-- items -->
<svg class="a" style="left:818px;top:348px" width="5" height="12"><circle cx="2.4" cy="3" r="1.3" fill="#9a9a9a"/><circle cx="2.4" cy="8" r="1.3" fill="#9a9a9a"/></svg>
<div class="t" style="left:827.6px;top:348.5px;font-size:11.1px;color:#222">order_date_year</div>
<svg class="a" style="left:932px;top:348px" width="13" height="13"><circle cx="6.5" cy="6.5" r="6" fill="#bdbdbd"/><circle cx="7.6" cy="3.4" r="1" fill="#fff"/><path d="M6.3 5.5 H8.2 L7 10.3 Q6.9 10.8 7.6 10.5 L7.4 11 Q6.2 11.5 5.3 11 Q5.1 10.7 5.2 10.3 L6.1 6.2 L5.6 6.2 Z" fill="#fff"/></svg>
<svg class="a" style="left:665px;top:502px" width="5" height="12"><circle cx="2.4" cy="3" r="1.3" fill="#9a9a9a"/><circle cx="2.4" cy="8" r="1.3" fill="#9a9a9a"/></svg>
<div class="t" style="left:674.5px;top:502.2px;font-size:11.6px;color:#222">ip_country</div>
<svg class="a" style="left:780.5px;top:501.5px" width="13" height="13"><circle cx="6.5" cy="6.5" r="6" fill="#bdbdbd"/><circle cx="7.6" cy="3.4" r="1" fill="#fff"/><path d="M6.3 5.5 H8.2 L7 10.3 Q6.9 10.8 7.6 10.5 L7.4 11 Q6.2 11.5 5.3 11 Q5.1 10.7 5.2 10.3 L6.1 6.2 L5.6 6.2 Z" fill="#fff"/></svg>
<svg class="a" style="left:817px;top:502px" width="5" height="12"><circle cx="2.4" cy="3" r="1.3" fill="#9a9a9a"/><circle cx="2.4" cy="8" r="1.3" fill="#9a9a9a"/></svg>
<div class="t" style="left:826.4px;top:502.1px;font-size:11.7px;color:#222">Sum of total</div>
<svg class="a" style="left:932px;top:501.5px" width="13" height="13"><circle cx="6.5" cy="6.5" r="6" fill="#bdbdbd"/><circle cx="7.6" cy="3.4" r="1" fill="#fff"/><path d="M6.3 5.5 H8.2 L7 10.3 Q6.9 10.8 7.6 10.5 L7.4 11 Q6.2 11.5 5.3 11 Q5.1 10.7 5.2 10.3 L6.1 6.2 L5.6 6.2 Z" fill="#fff"/></svg>
<div class="t" style="left:724px;top:619.8px;font-size:13.5px;color:#828282">Drag fields between areas</div>
</body></html>
